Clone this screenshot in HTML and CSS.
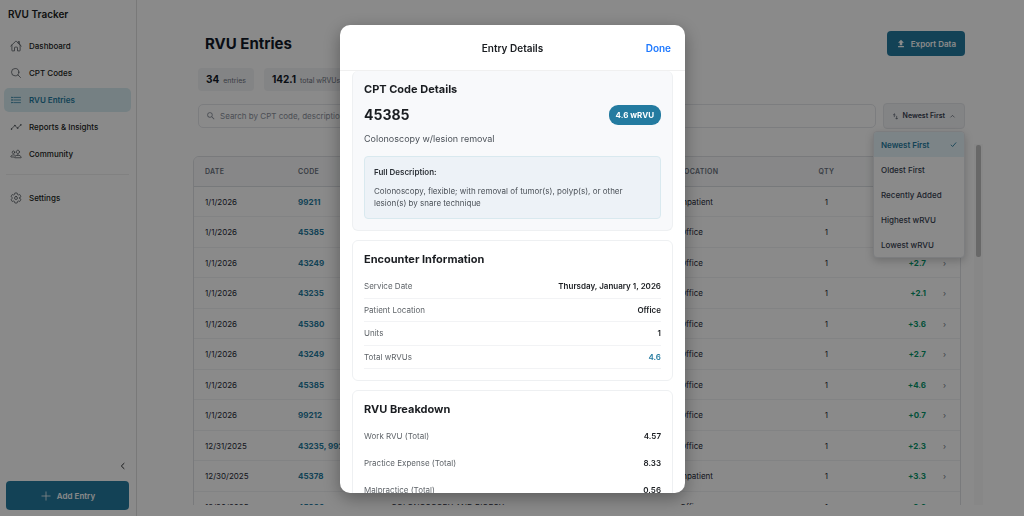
FILE: index.html
```html
<!DOCTYPE html>
<html lang="en">
<head>
    <meta charset="UTF-8">
    <meta name="viewport" content="width=device-width, initial-scale=1.0">
    <title>RVU Tracker</title>
    <link rel="stylesheet" href="styles.css">
</head>
<body>
    <div class="app">
        <!-- Sidebar -->
        <aside class="sidebar">
            <div class="brand">RVU Tracker</div>
            <nav class="nav">
                <a class="nav-item" href="#">
                    <svg class="icon" viewBox="0 0 512 512"><path d="M80 212v236a16 16 0 0016 16h96V328a24 24 0 0124-24h80a24 24 0 0124 24v136h96a16 16 0 0016-16V212"/><path d="M480 256L266.89 52c-5-5.28-16.69-5.34-21.78 0L32 256M400 179V64h-48v69"/></svg>
                    Dashboard
                </a>
                <a class="nav-item" href="#">
                    <svg class="icon" viewBox="0 0 512 512"><circle cx="221" cy="221" r="157"/><path d="M338 338l110 110"/></svg>
                    CPT Codes
                </a>
                <a class="nav-item active" href="#">
                    <svg class="icon" viewBox="0 0 512 512"><path d="M160 144h288M160 256h288M160 368h288"/><circle cx="80" cy="144" r="16"/><circle cx="80" cy="256" r="16"/><circle cx="80" cy="368" r="16"/></svg>
                    RVU Entries
                </a>
                <a class="nav-item" href="#">
                    <svg class="icon" viewBox="0 0 512 512"><path d="M56 344l152-152 112 112 136-136"/><circle cx="456" cy="168" r="14"/><circle cx="320" cy="304" r="14"/><circle cx="208" cy="192" r="14"/><circle cx="56" cy="344" r="14"/></svg>
                    Reports &amp; Insights
                </a>
                <a class="nav-item" href="#">
                    <svg class="icon" viewBox="0 0 512 512"><path d="M402 168c-2.93 40.67-33.1 72-66 72s-63.12-31.32-66-72c-3-42.31 26.37-72 66-72s69 30.46 66 72z"/><path d="M336 304c-65.17 0-127.84 32.37-143.54 95.41-2.08 8.34 3.15 16.59 11.72 16.59h263.65c8.57 0 13.77-8.25 11.72-16.59C463.85 335.36 401.18 304 336 304z"/><path d="M200 185.94c-2.34 32.48-26.72 58.06-53 58.06s-50.7-25.57-53-58.06C91.61 152.15 115.34 128 147 128s55.39 24.77 53 57.94zM206 306c-18.05-8.27-37.93-11.45-59-11.45-52 0-102.1 25.85-114.65 76.2-1.65 6.66 2.53 13.25 9.37 13.25H154"/></svg>
                    Community
                </a>
                <hr class="nav-divider">
                <a class="nav-item" href="#">
                    <svg class="icon" viewBox="0 0 512 512"><path d="M262.29 192.31a64 64 0 1057.4 57.4 64.13 64.13 0 00-57.4-57.4zM416.39 256a154.34 154.34 0 01-1.53 20.79l45.21 35.46a10.81 10.81 0 012.45 13.75l-42.77 74a10.81 10.81 0 01-13.14 4.59l-44.9-18.08a16.11 16.11 0 00-15.17 1.75A164.48 164.48 0 01325 400.8a15.94 15.94 0 00-8.82 12.14l-6.73 47.89a11.08 11.08 0 01-10.68 9.17h-85.54a11.11 11.11 0 01-10.69-8.87l-6.72-47.82a16.07 16.07 0 00-9-12.22 155.3 155.3 0 01-21.46-12.57 16 16 0 00-15.11-1.71l-44.89 18.07a10.81 10.81 0 01-13.14-4.58l-42.77-74a10.8 10.8 0 012.45-13.75l38.21-30a16.05 16.05 0 006-14.08c-.36-4.17-.58-8.33-.58-12.5s.21-8.27.58-12.35a16 16 0 00-6.07-13.94l-38.19-30A10.81 10.81 0 0149.48 186l42.77-74a10.81 10.81 0 0113.14-4.59l44.9 18.08a16.11 16.11 0 0015.17-1.75A164.48 164.48 0 01187 111.2a15.94 15.94 0 008.82-12.14l6.73-47.89A11.08 11.08 0 01213.23 42h85.54a11.11 11.11 0 0110.69 8.87l6.72 47.82a16.07 16.07 0 009 12.22 155.3 155.3 0 0121.46 12.57 16 16 0 0015.11 1.71l44.89-18.07a10.81 10.81 0 0113.14 4.58l42.77 74a10.8 10.8 0 01-2.45 13.75l-38.21 30a16.05 16.05 0 00-6.05 14.08c.33 4.14.55 8.3.55 12.47z"/></svg>
                    Settings
                </a>
            </nav>
            <button class="collapse" aria-label="Collapse sidebar">
                <svg class="icon" viewBox="0 0 512 512"><path d="M300 144L184 256l116 112"/></svg>
            </button>
            <button class="btn add-entry">
                <svg class="icon" viewBox="0 0 512 512"><path d="M256 80v352M432 256H80"/></svg>
                Add Entry
            </button>
        </aside>

        <!-- Entries -->
        <main class="main">
            <header class="page-header">
                <h1>RVU Entries</h1>
                <button class="btn export">
                    <svg class="glyph" viewBox="0 0 24 24"><path d="M5 20h14v-3H5v3zm4-5h6V9h4l-7-7-7 7h4v6z"/></svg>
                    Export Data
                </button>
            </header>

            <div class="stats">
                <div class="stat"><strong>34</strong> entries</div>
                <div class="stat"><strong>142.1</strong> total wRVUs</div>
            </div>

            <div class="toolbar">
                <label class="search">
                    <svg class="glyph" viewBox="0 0 24 24"><path d="M15.5 14h-.79l-.28-.27A6.47 6.47 0 0016 9.5 6.5 6.5 0 109.5 16c1.61 0 3.09-.59 4.23-1.57l.27.28v.79l5 4.99L20.49 19l-4.99-5zm-6 0C7.01 14 5 11.99 5 9.5S7.01 5 9.5 5 14 7.01 14 9.5 11.99 14 9.5 14z"/></svg>
                    <input type="text" placeholder="Search by CPT code, description, or location" aria-label="Search entries">
                </label>
                <div class="sort">
                    <button class="sort-button" aria-expanded="true">
                        <svg class="sort-icon" viewBox="0 0 24 24"><path d="M8 14V3M4 7l4-4 4 4M16 10v11M12 17l4 4 4-4"/></svg>
                        Newest First
                        <svg class="sort-icon" viewBox="0 0 24 24"><path d="M5 15l7-7 7 7"/></svg>
                    </button>
                    <div class="sort-menu">
                        <button class="sort-option selected">Newest First <svg class="check" viewBox="0 0 24 24"><path d="M3 13l6 6L21 5"/></svg></button>
                        <button class="sort-option">Oldest First</button>
                        <button class="sort-option">Recently Added</button>
                        <button class="sort-option">Highest wRVU</button>
                        <button class="sort-option">Lowest wRVU</button>
                    </div>
                </div>
            </div>

            <div class="table-scroll">
                <div class="table-card">
                    <table class="entries">
                        <thead>
                            <tr>
                                <th class="col-date">Date</th>
                                <th class="col-code">Code</th>
                                <th>Description</th>
                                <th class="col-location">Location</th>
                                <th class="col-qty">Qty</th>
                                <th class="col-rvu">wRVU</th>
                                <th class="col-open"></th>
                            </tr>
                        </thead>
                        <tbody>
                            <tr><td>1/1/2026</td><td class="code">99211</td><td></td><td>Inpatient</td><td class="qty">1</td><td class="rvu">+0.2</td><td class="open">›</td></tr>
                            <tr><td>1/1/2026</td><td class="code">45385</td><td></td><td>Office</td><td class="qty">1</td><td class="rvu">+4.6</td><td class="open">›</td></tr>
                            <tr><td>1/1/2026</td><td class="code">43249</td><td></td><td>Office</td><td class="qty">1</td><td class="rvu">+2.7</td><td class="open">›</td></tr>
                            <tr><td>1/1/2026</td><td class="code">43235</td><td></td><td>Office</td><td class="qty">1</td><td class="rvu">+2.1</td><td class="open">›</td></tr>
                            <tr><td>1/1/2026</td><td class="code">45380</td><td></td><td>Office</td><td class="qty">1</td><td class="rvu">+3.6</td><td class="open">›</td></tr>
                            <tr><td>1/1/2026</td><td class="code">43249</td><td></td><td>Office</td><td class="qty">1</td><td class="rvu">+2.7</td><td class="open">›</td></tr>
                            <tr><td>1/1/2026</td><td class="code">45385</td><td></td><td>Office</td><td class="qty">1</td><td class="rvu">+4.6</td><td class="open">›</td></tr>
                            <tr><td>1/1/2026</td><td class="code">99212</td><td></td><td>Office</td><td class="qty">1</td><td class="rvu">+0.7</td><td class="open">›</td></tr>
                            <tr><td>12/31/2025</td><td class="code">43235, 99212</td><td></td><td>Office</td><td class="qty">1</td><td class="rvu">+2.3</td><td class="open">›</td></tr>
                            <tr><td>12/30/2025</td><td class="code">45378</td><td></td><td>Inpatient</td><td class="qty">1</td><td class="rvu">+3.3</td><td class="open">›</td></tr>
                            <tr><td>12/30/2025</td><td class="code">45380</td><td>COLONOSCOPY AND BIOPSY</td><td>Office</td><td class="qty">1</td><td class="rvu">+3.6</td><td class="open">›</td></tr>
                        </tbody>
                    </table>
                </div>
                <div class="scrollbar"><div class="scroll-thumb"></div></div>
            </div>
        </main>
    </div>

    <!-- Entry details modal -->
    <div class="overlay">
        <div class="modal" role="dialog" aria-labelledby="modal-title">
            <header class="modal-header">
                <h2 id="modal-title">Entry Details</h2>
                <button class="done">Done</button>
            </header>
            <div class="modal-body">
                <section class="card card-code">
                    <h3>CPT Code Details</h3>
                    <div class="code-row">
                        <span class="code-number">45385</span>
                        <span class="badge">4.6 wRVU</span>
                    </div>
                    <p class="summary">Colonoscopy w/lesion removal</p>
                    <div class="description">
                        <h4>Full Description:</h4>
                        <p>Colonoscopy, flexible; with removal of tumor(s), polyp(s), or other lesion(s) by snare technique</p>
                    </div>
                </section>

                <section class="card">
                    <h3>Encounter Information</h3>
                    <dl class="rows lined">
                        <div><dt>Service Date</dt><dd>Thursday, January 1, 2026</dd></div>
                        <div><dt>Patient Location</dt><dd>Office</dd></div>
                        <div><dt>Units</dt><dd>1</dd></div>
                        <div><dt>Total wRVUs</dt><dd class="highlight">4.6</dd></div>
                    </dl>
                </section>

                <section class="card">
                    <h3>RVU Breakdown</h3>
                    <dl class="rows breakdown">
                        <div><dt>Work RVU (Total)</dt><dd>4.57</dd></div>
                        <div><dt>Practice Expense (Total)</dt><dd>8.33</dd></div>
                        <div><dt>Malpractice (Total)</dt><dd>0.56</dd></div>
                    </dl>
                </section>
            </div>
        </div>
    </div>
</body>
</html>
```

FILE: styles.css
```css
* {
    box-sizing: border-box;
}

body {
    margin: 0;
    font-family: Inter, "Liberation Sans", sans-serif;
    font-size: 8px;
    line-height: 12px;
    color: #1a1d21;
    background-color: #fff;
}

h1, h2, h3, h4, p, dl, dd {
    margin: 0;
}

button, input {
    font: inherit;
    color: inherit;
    border: none;
    background: none;
    padding: 0;
}

button {
    cursor: pointer;
}

.app {
    display: flex;
    height: 100vh;
    overflow: hidden;
}

.icon {
    width: 12px;
    height: 12px;
    fill: none;
    stroke: currentColor;
    stroke-width: 32;
    stroke-linecap: round;
    stroke-linejoin: round;
}

.glyph {
    width: 10px;
    height: 10px;
    fill: currentColor;
}

.btn {
    display: flex;
    align-items: center;
    justify-content: center;
    gap: 5px;
    border-radius: 4px;
    background-color: #247ba0;
    color: #fff;
    font-weight: 600;
}

/* Sidebar */
.sidebar {
    display: flex;
    flex-direction: column;
    flex-shrink: 0;
    width: 137px;
    padding: 7px 7px 6px 4px;
    border-right: 1px solid #e0e0e0;
}

.brand {
    padding: 0 4px;
    font-size: 10px;
    line-height: 14px;
    font-weight: 600;
}

.nav {
    display: flex;
    flex-direction: column;
    gap: 3px;
    margin-top: 13px;
    flex: 1;
}

.nav-item {
    display: flex;
    align-items: center;
    gap: 7px;
    height: 24px;
    padding: 0 6px;
    margin-right: -2px;
    border-radius: 5px;
    color: #1a1d21;
    font-weight: 500;
    text-decoration: none;
}

.nav-item .icon {
    color: #4b5158;
}

.nav-item.active {
    background-color: #d9edf2;
    color: #247ba0;
    font-weight: 600;
}

.nav-item.active .icon {
    color: #247ba0;
}

.nav-divider {
    width: 123px;
    margin: 5px 2px 8px;
    border: 0;
    border-top: 1px solid #eee;
}

.collapse {
    align-self: flex-end;
    height: 12px;
    margin-bottom: 9px;
}

.collapse .icon {
    stroke-width: 40;
}

.add-entry {
    height: 29px;
    margin: 0 0 0 2px;
}

/* Main */
.main {
    display: flex;
    flex-direction: column;
    flex: 1;
    min-width: 0;
    padding: 31px 41px 11px 56px;
}

.page-header {
    display: flex;
    justify-content: space-between;
    align-items: center;
    padding: 0 18px 0 12px;
}

h1 {
    font-size: 15px;
    line-height: 20px;
    font-weight: 700;
    color: #111827;
}

.export {
    height: 25px;
    padding: 0 9px;
}

.stats {
    display: flex;
    gap: 10px;
    margin-top: 12px;
    padding-left: 5px;
}

.stat {
    height: 23px;
    padding: 0 8px;
    border-radius: 4px;
    background-color: #f3f4f6;
    font-size: 7px;
    line-height: 23px;
    color: #6b7280;
}

.stat strong {
    margin-right: 2px;
    font-size: 10px;
    font-weight: 700;
    color: #111827;
}

.toolbar {
    display: flex;
    align-items: center;
    gap: 7px;
    margin-top: 12px;
    padding: 0 18px 0 5px;
}

.search {
    display: flex;
    flex: 1;
    align-items: center;
    gap: 4px;
    height: 24px;
    padding: 0 7px;
    border: 1px solid #e5e7eb;
    border-radius: 5px;
    color: #8b919c;
}

.search input {
    flex: 1;
    outline: none;
}

.search input::placeholder {
    color: #8b919c;
}

.sort {
    position: relative;
}

.sort-button {
    display: flex;
    align-items: center;
    gap: 4px;
    height: 26px;
    padding: 0 8px;
    border: 1px solid #e5e7eb;
    border-radius: 4px;
    background-color: #f3f4f6;
    font-size: 7px;
    font-weight: 600;
    color: #374151;
}

.sort-icon {
    width: 7px;
    height: 7px;
    fill: none;
    stroke: currentColor;
    stroke-width: 2;
}

.sort-menu {
    position: absolute;
    top: 28px;
    right: 0;
    z-index: 1;
    width: 92px;
    border: 1px solid #e5e7eb;
    border-radius: 4px;
    background-color: #fff;
    box-shadow: 0 3px 8px rgba(0, 0, 0, 0.2);
    overflow: hidden;
}

.sort-option {
    display: flex;
    align-items: center;
    justify-content: space-between;
    width: 100%;
    height: 25px;
    padding: 0 7px;
    font-weight: 500;
    color: #374151;
}

.sort-option.selected {
    background-color: #e6f4f9;
    color: #247ba0;
    font-weight: 600;
}

.check {
    width: 7px;
    height: 7px;
    fill: none;
    stroke: currentColor;
    stroke-width: 3;
}

/* Table */
.table-scroll {
    display: flex;
    flex: 1;
    gap: 13px;
    min-height: 0;
    margin-top: 15px;
    overflow: hidden;
}

.table-card {
    flex: 1;
    align-self: flex-start;
    margin-top: 12px;
    border: 1px solid #e0e2e6;
    border-radius: 6px;
    overflow: hidden;
}

.entries {
    width: 100%;
    table-layout: fixed;
    border-collapse: separate;
    border-spacing: 0;
}

.entries th,
.entries td {
    padding: 0 11px;
    text-align: left;
    white-space: nowrap;
}

.entries th {
    height: 30px;
    border-bottom: 1px solid #dcdfe4;
    background-color: #f9fafb;
    font-size: 7px;
    font-weight: 600;
    letter-spacing: 0.3px;
    text-transform: uppercase;
    color: #6b7280;
}

.entries td {
    height: 30px;
    border-bottom: 1px solid #f1f2f4;
    color: #1f2937;
}

.entries tr:nth-child(even) td {
    height: 31px;
}

.entries .col-date,
.entries .col-code {
    width: 93px;
}

.entries .col-location {
    width: 117px;
}

.entries .col-qty {
    width: 81px;
    text-align: center;
}

.entries .col-rvu {
    width: 70px;
    text-align: right;
}

.entries .col-open {
    width: 23px;
}

.entries .code {
    color: #247ba0;
    font-weight: 700;
}

.entries .qty {
    text-align: center;
}

.entries .rvu {
    color: #059669;
    font-weight: 700;
    text-align: right;
}

.entries .open {
    padding: 0 6px;
    color: #6b7280;
}

.scrollbar {
    width: 9px;
    padding: 1px 2px;
    background-color: #fafafa;
}

.scroll-thumb {
    height: 112px;
    border-radius: 2px;
    background-color: #c1c1c1;
}

/* Modal */
.overlay {
    position: fixed;
    inset: 0;
    z-index: 10;
    display: flex;
    justify-content: center;
    padding: 25px 0 23px 1px;
    background-color: rgba(0, 0, 0, 0.46);
}

.modal {
    display: flex;
    flex-direction: column;
    width: 345px;
    border-radius: 10px;
    background-color: #fff;
    box-shadow: 0 5px 18px rgba(0, 0, 0, 0.35);
    overflow: hidden;
}

.modal-header {
    display: grid;
    grid-template-columns: 1fr auto 1fr;
    align-items: center;
    flex-shrink: 0;
    height: 46px;
    padding: 0 14px;
    border-bottom: 1px solid #f0f0f0;
}

.modal-header h2 {
    grid-column: 2;
    font-size: 10px;
    font-weight: 600;
}

.done {
    justify-self: end;
    font-size: 10px;
    font-weight: 600;
    color: #1d78ff;
}

.modal-body {
    display: flex;
    flex-direction: column;
    gap: 9px;
    padding: 0 12px;
    overflow: hidden;
}

.card {
    flex-shrink: 0;
    padding: 11px;
    border: 1px solid #eef0f2;
    border-radius: 6px;
}

.card-code {
    border-top: none;
    background-color: #f8f9fb;
}

.card h3 {
    font-size: 11px;
    line-height: 14px;
    font-weight: 700;
}

.code-row {
    display: flex;
    align-items: center;
    justify-content: space-between;
    margin-top: 9px;
}

.code-number {
    font-size: 14px;
    line-height: 20px;
    font-weight: 700;
}

.badge {
    padding: 4px 7px;
    border-radius: 9px;
    background-color: #247ba0;
    color: #fff;
    font-weight: 700;
}

.summary {
    margin-top: 8px;
    font-size: 9px;
    color: #4b5158;
}

.description {
    margin-top: 11px;
    padding: 9px;
    border: 1px solid #d9e9ef;
    border-radius: 4px;
    background-color: #edf2f7;
}

.description h4 {
    font-size: 8px;
    line-height: 13px;
    font-weight: 600;
    color: #2d3238;
}

.description p {
    margin-top: 6px;
    color: #4b5158;
}

.rows {
    display: grid;
    grid-auto-rows: 1fr;
    margin-top: 9px;
}

.rows div {
    display: flex;
    align-items: center;
    justify-content: space-between;
}

.rows.lined {
    height: 94px;
}

.lined div {
    border-bottom: 1px solid #f2f3f5;
}

.rows.breakdown {
    margin-top: 6px;
}

.breakdown div {
    height: 27px;
}

.rows dt {
    color: #5f6469;
}

.rows dd {
    font-weight: 600;
}

.rows .highlight {
    color: #247ba0;
}
```
